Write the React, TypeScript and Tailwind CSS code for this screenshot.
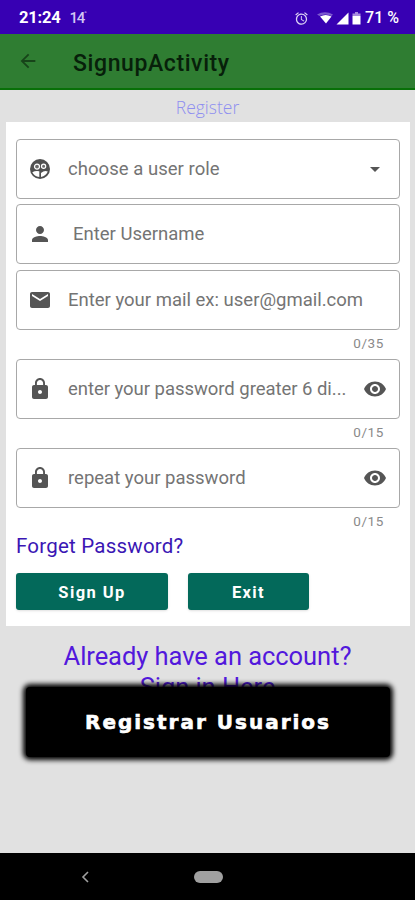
import React, { useState } from "react";
import {
  MdAlarm,
  MdArrowBack,
  MdArrowDropDown,
  MdEmail,
  MdLock,
  MdPerson,
  MdVisibility,
} from "react-icons/md";

type FieldProps = {
  icon: React.ReactNode;
  label: string;
  labelClass: string;
  trailing?: React.ReactNode;
};

function Field({ icon, label, labelClass, trailing }: FieldProps) {
  return (
    <div className="flex h-[60px] items-center rounded-[4px] border border-[#a8a8a8] bg-white pl-[11px] pr-3 text-[#555555]">
      <span className="flex w-6 shrink-0 justify-center">{icon}</span>
      <span
        className={`min-w-0 flex-1 whitespace-pre text-[18.5px] leading-6 text-[#747474] ${labelClass}`}
      >
        {label}
      </span>
      {trailing}
    </div>
  );
}

// two people inside a disc
function RoleIcon() {
  return (
    <svg className="h-6 w-6" viewBox="0 0 24 24">
      <circle cx="12" cy="12" r="10" fill="#505050" />
      <path
        d="M4.3 15.2Q7.5 13.4 11.3 14.2V20Q6.2 19.200 4.300 15.200ZM13 16Q16.500 13 19.800 14.600Q18 19 13 20Z"
        fill="#fff"
      />
      <circle cx="9" cy="9.6" r="2.5" fill="#6a6a6a" stroke="#fff" strokeWidth="1.2" />
      <circle cx="15.600" cy="9.200" r="2.100" fill="#6a6a6a" stroke="#fff" strokeWidth="1.2" />
    </svg>
  );
}

function Counter({ value }: { value: string }) {
  return (
    <p className="flex h-[29px] items-center justify-end pb-[2px] pr-[16px] text-[13.5px] tracking-[0.6px] text-[#8a8a8a]">
      {value}
    </p>
  );
}

function StatusBar() {
  return (
    <div className="flex h-[34px] items-center bg-[#3700b3] pl-[19px] pr-[16px] pt-[2px] text-white">
      <span className="text-[16.5px] font-bold tracking-[-0.2px]">21:24</span>
      <span className="ml-[9px] text-[15px] font-medium tracking-[-1.3px] text-[#d2c5f3]">
        14
      </span>
      <span className="mb-2 text-[8px] text-[#c8b8f0]">°</span>
      <div className="ml-auto flex items-center">
        <MdAlarm className="h-[15px] w-[15px] text-[#dcd2f5]" />
        <svg className="ml-[7px] h-[14px] w-[18px]" viewBox="0 0 18 14">
          <path d="M1 3.5Q9-1 17 3.5L15.5 5Q9 2 3.5 5Z" fill="#7c59cf" />
          <path d="M4 5.5Q9.5 2.5 15.5 5.5L10 12.5Z" fill="#fff" />
        </svg>
        <svg className="ml-[2px] h-[13px] w-[13px]" viewBox="0 0 13 13">
          <path d="M12.5.5v12H.5Z" fill="#fff" />
        </svg>
        <svg className="ml-[3px] h-[13px] w-[9px]" viewBox="0 0 9 13">
          <path d="M3 0h3v1.5h2.5V4H.5V1.5H3Z" fill="#a78bdf" />
          <path d="M.5 4h8v8.5h-8Z" fill="#fff" />
        </svg>
        <span className="ml-[4px] text-[16px] font-medium leading-5">71 %</span>
      </div>
    </div>
  );
}

export default function SignupActivity() {
  const [title] = useState("SignupActivity");

  return (
    <div className="flex h-[900px] w-[415px] flex-col overflow-hidden bg-[#e1e1e1] font-['Roboto',sans-serif]">
      <StatusBar />
      <header className="flex h-[56px] items-center border-b-2 border-[#087008] bg-[#2f7d32] pl-[17px]">
        <MdArrowBack className="h-[22px] w-[22px] text-[#174419]" />
        <h1 className="ml-[34px] mt-[6px] text-[23px] font-medium leading-7 tracking-[0.6px] text-[#07200a]">
          {title}
        </h1>
      </header>

      <div className="flex h-[32px] items-center justify-center pt-[2px] font-['Open_Sans',sans-serif] text-[17.5px] font-light text-[#8f8ff0]">
        Register
      </div>

      <section className="ml-[6px] mr-[5px] h-[504px] bg-white pl-[10px] pr-[10px] pt-[17px]">
        <Field
          icon={<RoleIcon />}
          label="choose a user role"
          labelClass="ml-4 tracking-[0.04px]"
          trailing={<MdArrowDropDown className="h-6 w-6" />}
        />
        <div className="h-[5px]" />
        <Field
          icon={<MdPerson className="h-6 w-6" />}
          label="Enter Username"
          labelClass="ml-[21px]"
        />
        <div className="h-[6px]" />
        <Field
          icon={<MdEmail className="h-6 w-6" />}
          label="Enter your mail ex: user@gmail.com"
          labelClass="ml-4"
        />
        <Counter value="0/35" />
        <Field
          icon={<MdLock className="h-6 w-6" />}
          label="enter your password greater 6 di..."
          labelClass="ml-4 tracking-[-0.04px]"
          trailing={<MdVisibility className="h-6 w-6" />}
        />
        <Counter value="0/15" />
        <Field
          icon={<MdLock className="h-6 w-6" />}
          label="repeat your password"
          labelClass="ml-4"
          trailing={<MdVisibility className="h-6 w-6" />}
        />
        <Counter value="0/15" />

        <p className="h-[36px] text-[20.5px] leading-[18px] tracking-[0.22px] text-[#3a16b4]">
          Forget Password?
        </p>
        <div className="flex gap-5 text-[16.5px] font-bold tracking-[1.4px] text-white">
          <button className="h-[37px] w-[152px] rounded-[3px] bg-[#03695a] pt-[3px] shadow-sm">
            Sign Up
          </button>
          <button className="h-[37px] w-[121px] rounded-[3px] bg-[#03695a] pt-[3px] shadow-sm">
            Exit
          </button>
        </div>
      </section>

      <div className="relative h-[227px] pt-[15px] text-center text-[25.5px] leading-[31px] tracking-[-0.05px] text-[#5218dc]">
        <p>Already have an account?</p>
        <p>Sign in Here</p>
        {/* caption over the bottom of the sign in link */}
        <div className="absolute left-[26px] top-[61px] flex h-[70px] w-[364px] items-center justify-center rounded-[4px] bg-black font-['DejaVu_Sans',sans-serif] text-[20px] font-bold tracking-[2px] text-white shadow-[0_0_5px_3px_#000000] [-webkit-text-stroke:0.6px_white]">
          Registrar Usuarios
        </div>
      </div>

      <nav className="flex h-[47px] items-center bg-black">
        <svg className="ml-[81px] h-[12px] w-[9px]" viewBox="0 0 9 12">
          <path d="M7 1 2 6l5 5" fill="none" stroke="#a0a0a0" strokeWidth="1.6" />
        </svg>
        <span className="ml-[104px] h-[12px] w-[29px] rounded-full bg-[#a0a0a0]" />
      </nav>
    </div>
  );
}
